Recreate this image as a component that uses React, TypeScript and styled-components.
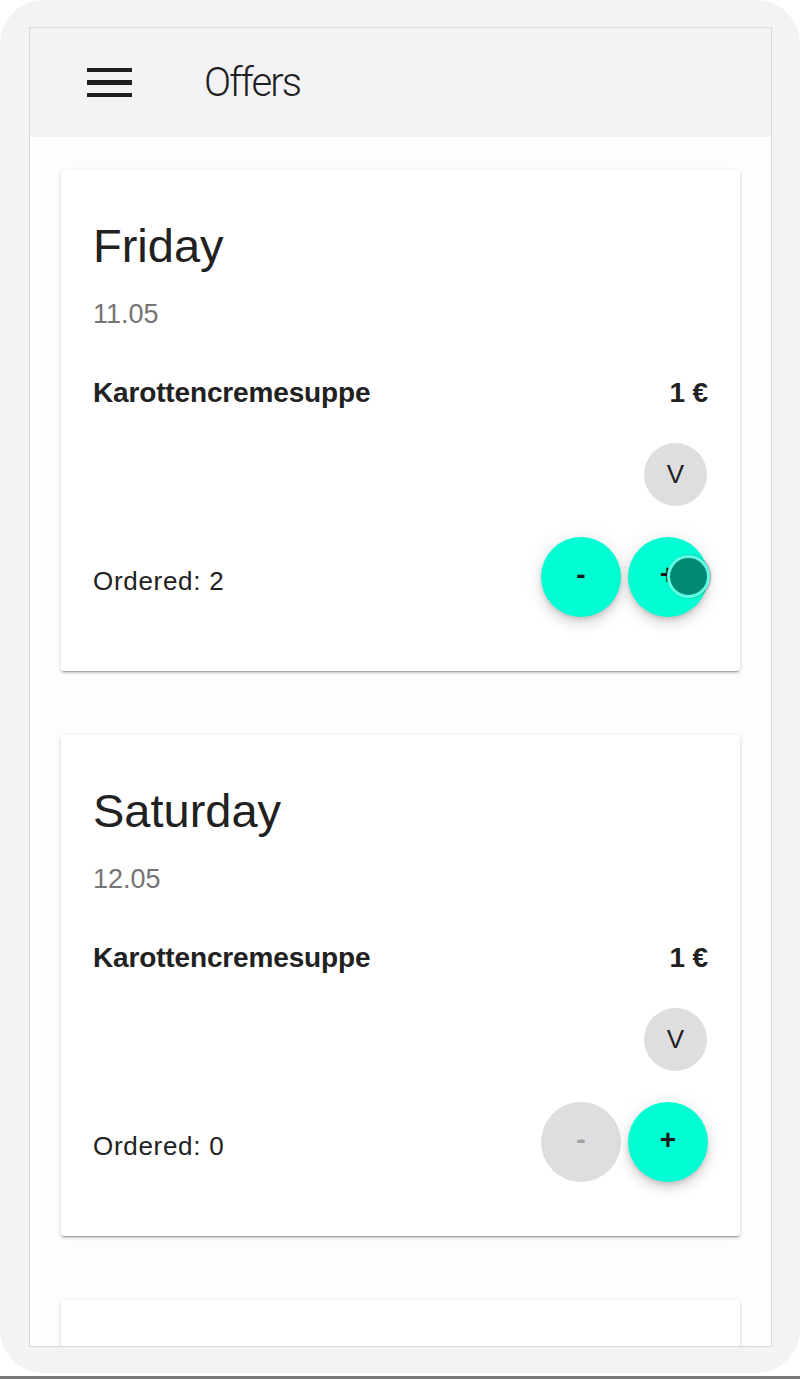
import styled, { createGlobalStyle } from "styled-components"

const GlobalStyle = createGlobalStyle`
    html, body {
        margin: 0;
        padding: 0;
        background: #ffffff;
    }
    * { box-sizing: border-box; }
`

type Offer = {
    day: string
    date: string
    dish: string
    price: string
    tag: string
    ordered: number
    pressed?: boolean
}

const offers: Offer[] = [
    { day: "Friday", date: "11.05", dish: "Karottencremesuppe", price: "1 €", tag: "V", ordered: 2, pressed: true },
    { day: "Saturday", date: "12.05", dish: "Karottencremesuppe", price: "1 €", tag: "V", ordered: 0 },
]

const App = () => {
  return (
    <>
        <GlobalStyle />
        <Device>
            <Screen>
                <Header>
                    <MenuIcon aria-label="menu">
                        <span />
                        <span />
                        <span />
                    </MenuIcon>
                    <Title>Offers</Title>
                </Header>
                <Content>
                    {offers.map((o) => (
                        <Card key={o.day}>
                            <DayTitle>{o.day}</DayTitle>
                            <DateText>{o.date}</DateText>
                            <ItemRow>
                                <span>{o.dish}</span>
                                <span>{o.price}</span>
                            </ItemRow>
                            <ChipRow>
                                <Chip>{o.tag}</Chip>
                            </ChipRow>
                            <ActionRow>
                                <Ordered>Ordered: {o.ordered}</Ordered>
                                <Buttons>
                                    <Fab disabled={o.ordered === 0}>-</Fab>
                                    <Fab>
                                        +
                                        {o.pressed && <Ripple />}
                                    </Fab>
                                </Buttons>
                            </ActionRow>
                        </Card>
                    ))}
                    {/* next day's card, still below the fold */}
                    <Card />
                </Content>
            </Screen>
        </Device>
        <BottomBar />
    </>
  )
}

export default App

const Device = styled.div`
    width: 800px;
    height: 1373px;
    background: #f3f2f5;
    border-radius: 44px;
    padding: 27px 28px 0 29px;
`

const Screen = styled.div`
    width: 743px;
    height: 1320px;
    border: 1px solid #d8d7da;
    background: #fdfcfe;
    overflow: hidden;
    display: flex;
    flex-direction: column;
`

const Header = styled.header`
    display: flex;
    align-items: center;
    height: 109px;
    flex-shrink: 0;
    padding-left: 57px;
    background: #f3f2f5;
`

const MenuIcon = styled.div`
    display: flex;
    flex-direction: column;
    gap: 8px;
    width: 45px;
    margin-right: 72px;

    span {
        display: block;
        height: 4.5px;
        background: #1f1f1f;
    }
`

const Title = styled.h1`
    margin: 0;
    font-family: "Roboto", "Liberation Sans", sans-serif;
    font-weight: 300;
    font-size: 40px;
    letter-spacing: -1.9px;
    color: #1f1f1f;
`

const Content = styled.main`
    display: flex;
    flex-direction: column;
    gap: 64px;
    padding: 33px 31px 0 31px;
`

const Card = styled.section`
    display: flex;
    flex-direction: column;
    flex-shrink: 0;
    height: 501px;
    padding: 0 32px 0 32px;
    background: #ffffff;
    border-radius: 3px;
    box-shadow: 0 2px 2px 0 rgba(0, 0, 0, 0.14), 0 3px 1px -2px rgba(0, 0, 0, 0.2), 0 1px 5px 0 rgba(0, 0, 0, 0.12);
    font-family: "Liberation Sans", Arial, sans-serif;
    color: #212121;
`

const DayTitle = styled.h2`
    margin: 48px 0 0;
    font-size: 47px;
    line-height: 56px;
    font-weight: 400;
`

const DateText = styled.div`
    margin-top: 24px;
    font-size: 27px;
    line-height: 32px;
    color: #757575;
`

const ItemRow = styled.div`
    display: flex;
    justify-content: space-between;
    margin-top: 46px;
    font-size: 28px;
    line-height: 34px;
    font-weight: 700;
    letter-spacing: -0.15px;
`

const ChipRow = styled.div`
    display: flex;
    justify-content: flex-end;
    margin-top: 33px;
`

const Chip = styled.div`
    display: flex;
    align-items: center;
    justify-content: center;
    width: 63px;
    height: 63px;
    margin-right: 1px;
    border-radius: 50%;
    background: #dedde0;
    font-size: 26px;
    color: #222;
`

const ActionRow = styled.div`
    display: flex;
    align-items: center;
    justify-content: space-between;
    height: 80px;
    margin-top: 31px;
`

const Ordered = styled.div`
    font-size: 26px;
    letter-spacing: 0.7px;
    padding-top: 8px;
`

const Buttons = styled.div`
    display: flex;
    gap: 7px;
`

const Fab = styled.button`
    position: relative;
    display: flex;
    align-items: center;
    justify-content: center;
    width: 80px;
    height: 80px;
    padding: 0 0 4px;
    border: none;
    border-radius: 50%;
    font-family: "Liberation Sans", Arial, sans-serif;
    font-size: 28px;
    font-weight: 700;
    background: ${(p) => (p.disabled ? "#dedde0" : "#00fdd3")};
    color: ${(p) => (p.disabled ? "#a3a3a3" : "#1a1a1a")};
    box-shadow: ${(p) =>
        p.disabled
            ? "none"
            : "0 7px 12px 0 rgba(0,0,0,0.11), 0 1px 20px 2px rgba(0,0,0,0.07), 0 3px 5px -1px rgba(0,0,0,0.14)"};
`

const Ripple = styled.span`
    position: absolute;
    left: 39px;
    top: 18px;
    width: 43px;
    height: 43px;
    border-radius: 50%;
    background: #028a72;
    border: 3px solid #5ffde4;
    box-shadow: 1px 0 2px rgba(0, 0, 0, 0.35);
`

const BottomBar = styled.div`
    height: 6px;
    border-top: 3px solid #ffffff;
    background: #7a7a7a;
`
